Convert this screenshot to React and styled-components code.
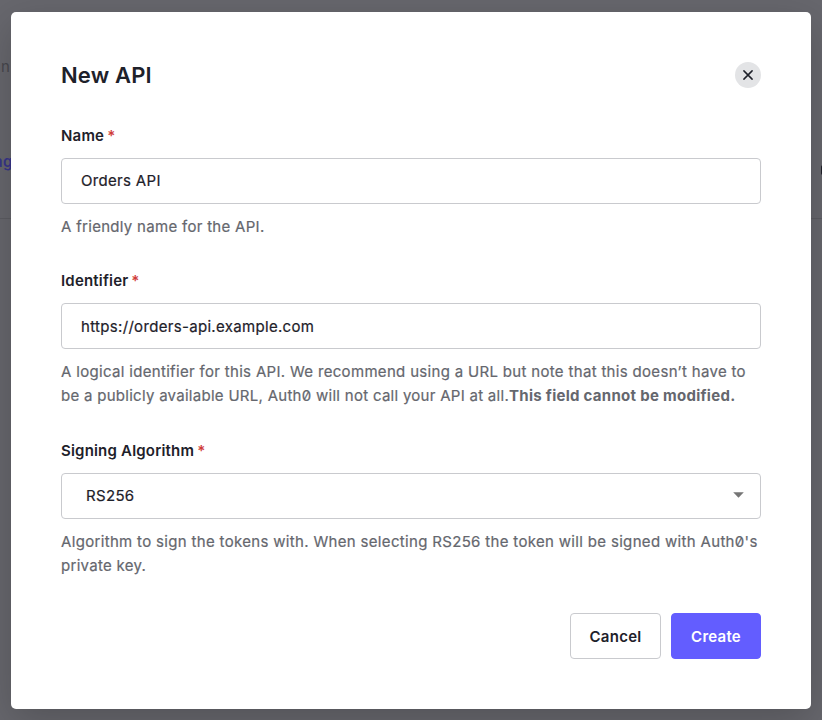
import React from 'react';
import styled, { createGlobalStyle } from 'styled-components';

const GlobalStyle = createGlobalStyle`
  * { box-sizing: border-box; }
  body { margin: 0; background: #65656c; font-family: Inter, sans-serif; color: #1e212a; overflow: hidden; font-feature-settings: "zero"; }
`;

const Page = styled.div`
  position: relative;
  width: 822px;
  height: 720px;
  padding: 12px 11px 11px;
  overflow: hidden;
  background: #67676d;
`;

const Backdrop = styled.div`
  position: absolute;
  inset: 0;
  font-size: 15px;
  line-height: 24px;
  letter-spacing: 0.3px;
`;

const Fragment = styled.span`
  position: absolute;
  top: ${(p) => p.$top}px;
  left: ${(p) => p.$left}px;
  color: ${(p) => p.$color};
  font-weight: ${(p) => p.$weight || 400};
`;

const Divider = styled.div`
  position: absolute;
  top: 218px;
  width: 100%;
  height: 1px;
  background: #5c5c62;
`;

const EdgeControl = styled.div`
  position: absolute;
  top: 165px;
  left: 820.5px;
  width: 8px;
  height: 10px;
  border-radius: 2px;
  background: #1e1f29;
`;

const Dialog = styled.section`
  position: relative;
  display: flex;
  flex-direction: column;
  width: 800px;
  height: 697px;
  padding: 46px 50px 50px;
  border-radius: 5px;
  background: #fff;
  box-shadow: 0 12px 40px rgba(0, 0, 0, 0.2);
`;

const Header = styled.header`
  display: flex;
  align-items: center;
  justify-content: space-between;
  height: 34px;
  margin-bottom: 32px;
`;

const Title = styled.h1`
  margin: 0;
  font-size: 22px;
  line-height: 34px;
  font-weight: 600;
  letter-spacing: 0.15px;
`;

const CloseButton = styled.button`
  display: grid;
  place-items: center;
  width: 26px;
  height: 26px;
  padding: 0;
  border: 0;
  border-radius: 50%;
  background: #e3e4e6;
  color: #1e212a;
`;

const Field = styled.div`
  display: flex;
  flex-direction: column;
  margin-bottom: ${(p) => p.$gap}px;
`;

const Label = styled.label`
  height: 24px;
  margin-bottom: 10px;
  font-size: 15px;
  line-height: 24px;
  font-weight: 600;
  letter-spacing: 0.19px;
`;

const Required = styled.span`
  margin-left: 3px;
  color: #d03c38;
`;

const Control = styled.div`
  display: flex;
  align-items: center;
  justify-content: space-between;
  height: 46px;
  padding: ${(p) => p.$drop || 0}px ${(p) => (p.$select ? '16px 0 24px' : '19px 0')};
  border: 1px solid #c9cace;
  border-radius: 4px;
`;

const Value = styled.span`
  font-size: 15px;
  line-height: 24px;
  letter-spacing: 0.32px;
  -webkit-text-stroke: 0.2px currentColor;
`;

const Arrow = styled.svg`
  margin-bottom: 2px;
`;

const Help = styled.p`
  margin: 11px 0 0;
  color: #65676e;
  font-size: 15px;
  line-height: 24px;
  white-space: nowrap;
  -webkit-text-stroke: 0.2px currentColor;
`;

const HelpLine = styled.span`
  display: block;
  letter-spacing: ${(p) => p.$tracking || 0.3}px;
`;

const Strong = styled.b`
  font-weight: 700;
  letter-spacing: 0.28px;
  -webkit-text-stroke: 0;
`;

const Actions = styled.footer`
  display: flex;
  justify-content: flex-end;
  gap: 10px;
`;

const Button = styled.button`
  width: ${(p) => (p.$primary ? 90 : 91)}px;
  height: 46px;
  padding: 2px 0 0;
  border: 1px solid ${(p) => (p.$primary ? '#635dff' : '#c9cace')};
  border-radius: 4px;
  background: ${(p) => (p.$primary ? '#635dff' : '#fff')};
  color: ${(p) => (p.$primary ? '#fff' : '#1e212a')};
  font: 600 15px/24px Inter, sans-serif;
  letter-spacing: 0.25px;
`;

function FormField({ label, gap, select, drop, value, children }) {
  return (
    <Field $gap={gap}>
      <Label>{label}<Required>*</Required></Label>
      <Control $select={select} $drop={drop}>
        <Value>{value}</Value>
        {select && <Arrow width="11" height="6" viewBox="0 0 11 6"><path d="M0.2 0.3H10.8L5.5 5.7Z" fill="#757575" /></Arrow>}
      </Control>
      <Help>{children}</Help>
    </Field>
  );
}

export default function App() {
  return (
    <Page>
      <GlobalStyle />
      <Backdrop>
        <Fragment $top={55} $left={1} $color="#47474e">n</Fragment>
        <Fragment $top={150} $left={-6} $color="#38358a" $weight={600}>ag</Fragment>
        <EdgeControl />
        <Divider />
      </Backdrop>
      <Dialog>
        <Header>
          <Title>New API</Title>
          <CloseButton aria-label="Close">
            <svg width="12" height="12" viewBox="0 0 12 12" fill="none" stroke="currentColor" strokeWidth="1.5" strokeLinecap="round"><path d="M1.9 1.9L10.1 10.1M10.1 1.9L1.9 10.1" /></svg>
          </CloseButton>
        </Header>
        <FormField label="Name" gap={30} value="Orders API">
          <HelpLine>A friendly name for the API.</HelpLine>
        </FormField>
        <FormField label="Identifier" gap={31} drop={2} value="https://orders-api.example.com">
          <HelpLine $tracking={0.32}>A logical identifier for this API. We recommend using a URL but note that this doesn’t have to</HelpLine>
          <HelpLine $tracking={0.28}>be a publicly available URL, Auth0 will not call your API at all.<Strong>This field cannot be modified.</Strong></HelpLine>
        </FormField>
        <FormField label="Signing Algorithm" gap={35} select value="RS256">
          <HelpLine $tracking={0.327}>Algorithm to sign the tokens with. When selecting RS256 the token will be signed with Auth0's</HelpLine>
          <HelpLine>private key.</HelpLine>
        </FormField>
        <Actions><Button>Cancel</Button><Button $primary>Create</Button></Actions>
      </Dialog>
    </Page>
  );
}
